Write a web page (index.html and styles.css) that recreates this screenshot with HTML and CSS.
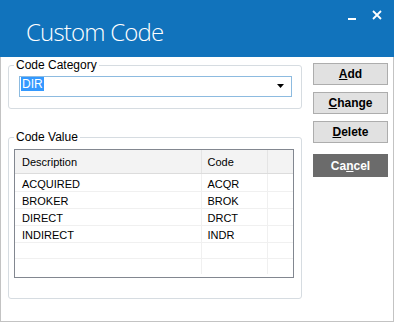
FILE: index.html
```html
<!DOCTYPE html>
<html lang="en">
<head>
    <meta charset="UTF-8">
    <title>Custom Code</title>
    <link rel="stylesheet" href="styles.css">
</head>
<body>
    <div class="window">
        <div class="titlebar">
            <span class="title">Custom Code</span>
            <div class="controls">
                <svg class="ctl-min" width="8" height="2" viewBox="0 0 8 2"><rect width="8" height="2" fill="#fff"/></svg>
                <svg class="ctl-close" width="10" height="10" viewBox="0 0 10 10"><path d="M1 1 L9 9 M9 1 L1 9" stroke="#fff" stroke-width="1.8"/></svg>
            </div>
        </div>
        <div class="content">
            <div class="main">
                <fieldset class="group group-category">
                    <legend>Code Category</legend>
                    <div class="combo">
                        <span class="combo-text">DIR</span>
                        <svg class="combo-arrow" width="7" height="4" viewBox="0 0 7 4"><path d="M0 0 H7 L3.5 4 Z" fill="#000"/></svg>
                    </div>
                </fieldset>
                <fieldset class="group group-value">
                    <legend>Code Value</legend>
                    <div class="grid">
                        <table>
                            <colgroup>
                                <col class="col-desc">
                                <col class="col-code">
                                <col class="col-rest">
                            </colgroup>
                            <thead>
                                <tr><th>Description</th><th>Code</th><th></th></tr>
                            </thead>
                            <tbody>
                                <tr class="first"><td>ACQUIRED</td><td>ACQR</td><td></td></tr>
                                <tr><td>BROKER</td><td>BROK</td><td></td></tr>
                                <tr><td>DIRECT</td><td>DRCT</td><td></td></tr>
                                <tr><td>INDIRECT</td><td>INDR</td><td></td></tr>
                                <tr><td></td><td></td><td></td></tr>
                                <tr class="last"><td></td><td></td><td></td></tr>
                            </tbody>
                        </table>
                    </div>
                </fieldset>
            </div>
            <div class="actions">
                <button class="btn"><u>A</u>dd</button>
                <button class="btn"><u>C</u>hange</button>
                <button class="btn"><u>D</u>elete</button>
                <button class="btn btn-cancel">Ca<u>n</u>cel</button>
            </div>
        </div>
    </div>
</body>
</html>
```

FILE: styles.css
```css
body {
    margin: 0;
    font-family: "Liberation Sans", Arial, sans-serif;
    background: #fff;
}
.window {
    width: 394px;
    height: 322px;
    display: flex;
    flex-direction: column;
    background: #fff;
}
.titlebar {
    height: 57px;
    flex-shrink: 0;
    background: #1173bc;
    display: flex;
    justify-content: space-between;
    align-items: flex-start;
}
.title {
    color: #fff;
    font-family: "Open Sans", "Liberation Sans", sans-serif;
    font-weight: 300;
    font-size: 24px;
    letter-spacing: -0.8px;
    line-height: 32px;
    padding: 16px 0 0 26px;
}
.controls {
    display: flex;
    align-items: flex-start;
    padding: 10px 12px 0 0;
}
.ctl-min {
    margin-top: 8px;
    margin-right: 16px;
}
.content {
    flex: 1;
    display: flex;
    border: 1px solid #c3c3c3;
    border-top: 0;
    padding: 1px 0 0 7px;
}
.main {
    width: 294px;
}
.group {
    box-sizing: border-box;
    width: 294px;
    margin: 0;
    min-width: 0;
    border: 1px solid #d6dce1;
    border-radius: 3px;
}
.group legend {
    font-size: 12px;
    line-height: 14px;
    padding: 0 2px;
    color: #000;
}
.group-category {
    padding: 4px 9px 11px 10px;
}
.group-category legend {
    margin-left: -5px;
}
.group-value {
    margin-top: 21px;
    padding: 5px 7px 20px 5px;
}
.combo {
    box-sizing: border-box;
    height: 21px;
    border: 1px solid #8dbbe0;
    display: flex;
    justify-content: space-between;
    align-items: flex-start;
}
.combo-text {
    margin: 0 0 0 1px;
    padding: 0 1px;
    background: #3399ff;
    color: #fff;
    font-size: 12px;
    line-height: 14px;
}
.combo-arrow {
    margin: 7px 7px 0 0;
}
.grid {
    box-sizing: border-box;
    width: 280px;
    height: 129px;
    border: 1px solid #828790;
}
.grid table {
    width: 278px;
    border-collapse: collapse;
    table-layout: fixed;
    font-size: 11px;
}
.col-desc { width: 186px; }
.col-code { width: 66px; }
.col-rest { width: 26px; }
.grid th {
    height: 23px;
    box-sizing: border-box;
    padding: 6px 0 0 7px;
    line-height: 13px;
    text-align: left;
    font-weight: normal;
    vertical-align: top;
    background: #f3f3f3;
    border-bottom: 1px solid #dcdcdc;
    border-right: 1px solid #e4e4e4;
}
.grid td {
    height: 16px;
    padding: 3px 0 0 7px;
    box-sizing: border-box;
    line-height: 13px;
    vertical-align: top;
    border-bottom: 1px solid #f0f0f0;
    border-right: 1px solid #f0f0f0;
}
.grid th:nth-child(2),
.grid td:nth-child(2) {
    padding-left: 6px;
}
.grid th:last-child,
.grid td:last-child {
    border-right: 0;
}
.grid tr.first td {
    height: 17px;
    padding-top: 4px;
}
.grid tr.last td {
    border-bottom: 0;
}
.actions {
    display: flex;
    flex-direction: column;
    width: 75px;
    margin-left: 11px;
    padding-top: 5px;
}
.btn {
    height: 22px;
    box-sizing: border-box;
    margin: 0 0 7px 0;
    padding: 0;
    border: 1px solid #adadad;
    background: #e1e1e1;
    color: #000;
    font-family: "Liberation Sans", Arial, sans-serif;
    font-weight: bold;
    font-size: 12px;
}
.btn-cancel {
    margin-top: 4px;
    height: 23px;
    background: #6b6b6b;
    border-color: #6b6b6b;
    color: #fff;
}
```
